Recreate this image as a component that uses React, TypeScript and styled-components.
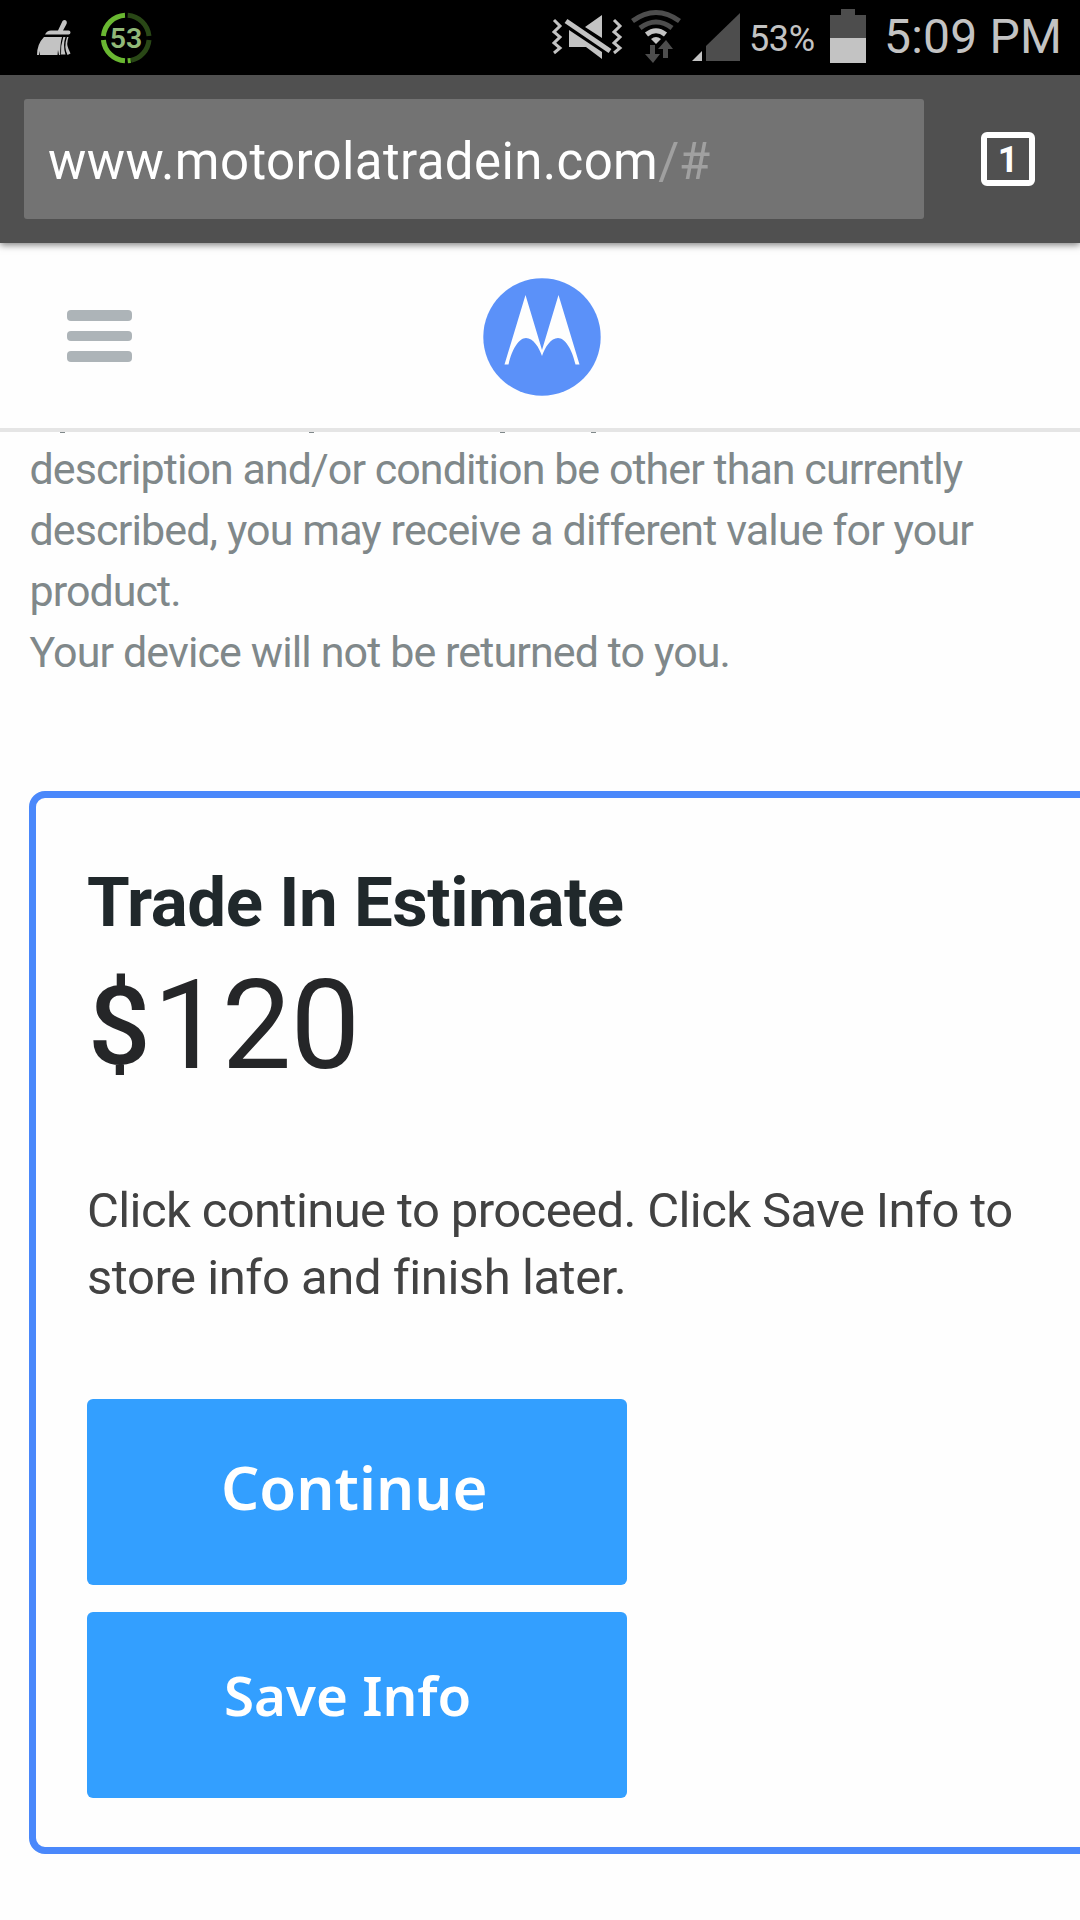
import React from "react";
import styled, { createGlobalStyle } from "styled-components";

const Global = createGlobalStyle`
  *{box-sizing:border-box}
  html,body{margin:0;padding:0;background:#fefefe}
  body{width:1080px;height:1920px;overflow:hidden;font-family:Roboto,"Liberation Sans",sans-serif}
`;

const Screen = styled.div`
  width:1080px;height:1920px;overflow:hidden;display:flex;flex-direction:column;background:#fefefe;
`;
const StatusBar = styled.div`
  height:75px;flex:none;background:#000;display:flex;justify-content:space-between;color:#c3c3c3;
`;
const StatusIcons = styled.svg`
  display:block;flex:none;height:75px;
`;
const StatusRight = styled.div`
  display:flex;align-items:flex-start;
`;
const Percent = styled.span`
  font-size:36px;line-height:42px;margin:18px 1px 0 -1px;width:80px;white-space:nowrap;letter-spacing:-0.4px;
`;
const Clock = styled.span`
  font-size:48px;line-height:56px;margin:9px 1px 0 -1px;width:195px;white-space:nowrap;letter-spacing:.2px;
`;
const BrowserBar = styled.div`
  height:168px;flex:none;background:#505050;display:flex;align-items:flex-start;padding:24px 45px 0 24px;
  justify-content:space-between;box-shadow:0 2px 7px rgba(0,0,0,.5);z-index:2;
`;
const Address = styled.div`
  width:900px;height:120px;border-radius:3px;background:#737373;color:#fff;padding:0 24px;
  font-size:51px;line-height:125px;white-space:nowrap;letter-spacing:.38px;
`;
const Faint = styled.span`color:#a0a0a0;letter-spacing:-.4px;`;
const TabCount = styled.div`
  width:54px;height:54px;margin-top:33px;border:6px solid #fff;border-radius:6px;color:#fff;
  font-size:36px;line-height:44px;font-weight:700;text-align:center;
`;
const SiteHeader = styled.header`
  height:189px;flex:none;background:#fefefe;border-bottom:4px solid #e5e5e5;
  display:grid;grid-template-columns:1fr auto 1fr;align-items:start;padding:0 67px;z-index:1;
`;
const Menu = styled.div`
  display:flex;flex-direction:column;gap:10px;margin-top:67px;
`;
const MenuLine = styled.div`
  width:65px;height:10.5px;border-radius:4px;background:#adb4b8;
`;
const Logo = styled.svg`display:block;margin:35px 0 0 4px;`;
const Notice = styled.section`
  height:359px;flex:none;padding-left:29.5px;color:#80888a;font-size:43px;line-height:61px;
`;
const Tails = styled.div`
  display:grid;grid-template-columns:249px 191px 91px 5px;height:1px;padding-left:30px;
`;
const Tail = styled.i`
  width:5px;height:1px;background:#80888a;
`;
const Lines = styled.p`
  margin:6px 0 0;white-space:nowrap;
`;
const Line = styled.span<{ $track?: number }>`
  display:block;letter-spacing:${p => p.$track ?? 0}px;
`;
const Estimate = styled.section`
  width:1100px;height:1063px;flex:none;margin-left:29px;padding-left:51px;border:7px solid #4a88fb;border-radius:16px;
`;
const Title = styled.h2`
  margin:65px 0 0;font-size:69px;line-height:80px;font-weight:700;color:#20282b;white-space:nowrap;letter-spacing:-.43px;
`;
const Price = styled.div`
  display:flex;align-items:baseline;height:146px;letter-spacing:-1px;
  margin-top:10px;font-size:124px;line-height:146px;color:#252628;
`;
const Currency = styled.span`
  font-size:110px;font-weight:500;width:66px;position:relative;top:-4px;left:1px;
`;
const Help = styled.p`
  margin:78px 0 0;font-size:49px;line-height:67px;color:#424242;white-space:nowrap;
`;
const Actions = styled.div`
  display:flex;flex-direction:column;gap:27px;margin-top:88px;
`;
const ActionButton = styled.button<{ $size: number; $pad: string }>`
  width:540px;height:186px;border:0;border-radius:6px;background:#339fff;color:#fff;display:block;
  font-family:"Noto Sans","Open Sans",sans-serif;font-weight:600;font-size:${p => p.$size}px;
  line-height:80px;padding:${p => p.$pad};text-align:left;white-space:nowrap;
`;

function Notifications() {
  return (
    <StatusIcons width="170" viewBox="0 0 170 75">
      <g fill="#c3c3c3">
        <path d="M62.5 21q2-2 4 0q1 2-.5 4L63 30.500h5.500q2 0 2 2t-2 2H45q2-4 6-4h7z" />
        <path d="M44 37H62q-2 7-1.800 18H59l-1-5-.5 5H40l-.5-4-.5 4H37q0-11 7-18z" />
        <path d="M63.300 37h2.200q-3 8 0 17.500H61q-.5-9 2.300-17.500zM67 37h1.500q-2.500 7 0 12l2 4.500-3 1.500q-4-8-.5-18z" />
      </g>
      <g fill="none" strokeWidth="5">
        <path d="M103.400 36A23 23 0 0 1 125 15.200M103.400 40A23 23 0 0 0 125 60.800" stroke="#69b731" />
        <path d="M127.700 15.200A23 23 0 0 1 149 36M149 40A23 23 0 0 1 131 60.400" stroke="#294716" />
        <path d="M127.700 60.800l3-.3" stroke="#69b731" />
      </g>
      <text x="126" y="48" textAnchor="middle" fontFamily="Roboto" fontSize="28.500" fontWeight="600" fill="#91b978">53</text>
    </StatusIcons>
  );
}

function Connectivity() {
  return (
    <StatusIcons width="200" viewBox="550 0 200 75">
      <g fill="none" stroke="#c3c3c3" strokeWidth="3">
        <path d="M554 20l6 6-6 6 6 5-6 6 6 5-6 5M614 20l6 6-6 6 6 5-6 6 6 5-6 5" />
      </g>
      <path d="M569 30l33 22v7l-16-12h-17zM585 27l17-12v23z" fill="#c3c3c3" />
      <path d="M566 21l44 30" stroke="#000" strokeWidth="9" />
      <path d="M566 21l44 30" stroke="#c3c3c3" strokeWidth="5" />
      <g fill="none" strokeWidth="5">
        <path d="M632.5 21Q656 4 679.5 21M640 28Q656 16 672 28" stroke="#4d4d4d" />
        <path d="M646.5 34.5Q656 27 665.5 34.5" stroke="#c3c3c3" />
      </g>
      <path d="M651 39q5-4 10 0l-5 5z" fill="#c3c3c3" />
      <path d="M650 45h5v9h5l-7 9-8-9h5zM663 58h5v-9h5l-7-9-8 9h5z" fill="#4d4d4d" />
      <path d="M706 61V46L740 13v48z" fill="#4d4d4d" />
      <path d="M692 61l10-10v10z" fill="#c3c3c3" />
    </StatusIcons>
  );
}

export default function App() {
  return (
    <>
      <Global />
      <Screen>
        <StatusBar>
          <Notifications />
          <StatusRight>
            <Connectivity />
            <Percent>53%</Percent>
            <StatusIcons width="55" viewBox="830 0 55 75">
              <path d="M830 15h11V9h14v6h11v23h-36z" fill="#4d4d4d" />
              <path d="M830 38h36v25h-36z" fill="#c3c3c3" />
            </StatusIcons>
            <Clock>5:09 PM</Clock>
          </StatusRight>
        </StatusBar>
        <BrowserBar>
          <Address>www.motorolatradein.com<Faint>/#</Faint></Address>
          <TabCount>1</TabCount>
        </BrowserBar>
        <SiteHeader>
          <Menu><MenuLine /><MenuLine /><MenuLine /></Menu>
          <Logo width="118" height="118" viewBox="0 0 118 118">
            <circle cx="59" cy="59" r="58.7" fill="#5b91f9" />
            <path d="M21.5 86.5L42.5 17 59 72 75.5 17 96.5 86.5H92.5C89 71 82 60 75 60C68 60 62 69 59 78C56 69 50 60 43 60C36 60 29 71 25.5 86.5z" fill="#fefefe" />
          </Logo>
        </SiteHeader>
        <Notice>
          <Tails><Tail /><Tail /><Tail /><Tail /></Tails>
          <Lines>
            <Line $track={-0.95}>description and/or condition be other than currently</Line>
            <Line $track={-0.88}>described, you may receive a different value for your</Line>
            <Line $track={-0.95}>product.</Line>
            <Line $track={-0.89}>Your device will not be returned to you.</Line>
          </Lines>
        </Notice>
        <Estimate>
          <Title>Trade In Estimate</Title>
          <Price><Currency>$</Currency>120</Price>
          <Help>
            <Line $track={-0.61}>Click continue to proceed. Click Save Info to</Line>
            <Line $track={-0.46}>store info and finish later.</Line>
          </Help>
          <Actions>
            <ActionButton $size={60} $pad="48px 0 58px 134px">Continue</ActionButton>
            <ActionButton $size={54.7} $pad="43px 0 63px 137px">Save Info</ActionButton>
          </Actions>
        </Estimate>
      </Screen>
    </>
  );
}
